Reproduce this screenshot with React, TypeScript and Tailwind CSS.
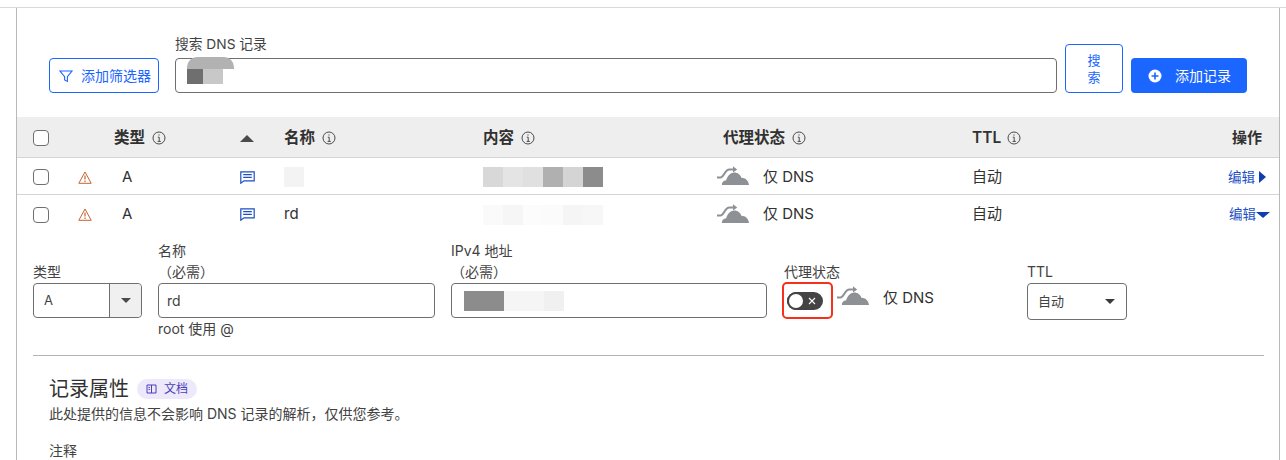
import React from 'react';

const InfoIcon = () => (
  <svg width="14" height="14" viewBox="0 0 14 14" fill="none" stroke="#4a4a4a" className="shrink-0">
    <circle cx="7" cy="7" r="6" strokeWidth="1" />
    <path d="M5.8 6.2H7.2V10.4M5.6 10.4H8.8" strokeWidth="1" />
    <path d="M6.4 3.4H7.6V4.6H6.4Z" fill="#4a4a4a" stroke="none" />
  </svg>
);

const CloudIcon = () => (
  <svg width="33" height="21" viewBox="0 0 33 21" className="shrink-0">
    <path d="M1 12.4H4.4C8 12.4 8.6 4.6 13.4 4.6H17.6" fill="none" stroke="#8d9095" strokeWidth="2" />
    <path d="M17 1.2L21.2 4.4L17 7.6Z" fill="#8d9095" />
    <path d="M6 20C5.6 17.4 7.6 15.4 10.2 15.2C11.4 11 14.6 7.6 18.4 7.6C21.6 7.6 24.4 9.8 25.4 12.8C29.2 12.8 32.6 15.6 33 20Z" fill="#8d9095" />
  </svg>
);

const WarnIcon = () => (
  <svg width="14" height="13" viewBox="0 0 14 13" fill="none" className="shrink-0">
    <path d="M7 1L13.2 12.3H.8Z" stroke="#c8622f" strokeWidth="1" />
    <path d="M7 4.4V8.6M7 9.6V11" stroke="#c8622f" strokeWidth="1.2" />
  </svg>
);

const CommentIcon = () => (
  <svg width="15" height="13" viewBox="0 0 15 13" fill="none" className="shrink-0">
    <path d="M.8.8H14.2V9.8H4L.8 12.2Z" stroke="#1d4fc4" strokeWidth="1.2" />
    <path d="M3.2 3.6H11.8M3.2 6.4H11.8" stroke="#1d4fc4" strokeWidth="1.2" />
  </svg>
);

const Checkbox = () => (
  <span className="block w-4 h-4 rounded-[4px] border border-[#6f6f6f] bg-white" />
);

const Caret = ({ className }: { className: string }) => <span className={className} />;

function HeaderLabel({ text }: { text: string }) {
  return (
    <div className="flex items-center gap-[7px] font-semibold text-[15.5px] text-[#313131]">
      <span>{text}</span>
      <InfoIcon />
    </div>
  );
}

function Pixels({ colors }: { colors: string[] }) {
  return (
    <div className="flex">
      {colors.map((c, i) => (
        <div key={i} className="w-5 h-5" style={{ background: c }} />
      ))}
    </div>
  );
}

const rowCols = 'grid grid-cols-[45px_36px_126px_44px_199px_240px_249px_1fr_auto] items-center pl-4 pr-[17px] pt-[2px]';

function Row({ name, content, action, bordered }: { name: React.ReactNode; content: React.ReactNode; action: React.ReactNode; bordered?: boolean }) {
  return (
    <div className={`${rowCols} h-[37px] text-[15px] text-[#313131] ${bordered ? 'border-b border-[#d4d4d4]' : ''}`}>
      <Checkbox />
      <WarnIcon />
      <span className="pl-2">A</span>
      <CommentIcon />
      <div>{name}</div>
      <div>{content}</div>
      <div className="flex items-center gap-[14px] -ml-[7px] -mt-[3px]">
        <CloudIcon />
        <span className="mt-[3px]">仅 DNS</span>
      </div>
      <span>自动</span>
      {action}
    </div>
  );
}

export default function App() {
  return (
    <div className="h-[460px] overflow-hidden bg-white pt-[7px] text-[#313131] font-['Inter','Noto_Sans_CJK_SC',sans-serif]">
      <div className="border-t border-[#d9d9d9]">
        <div className="ml-4 w-[1264px] h-[452px] border-x border-[#b9b9b9]">
          {/* search bar */}
          <div className="flex items-end pl-8 pr-8 pt-[29px]">
            <button className="flex items-center gap-[8px] w-[110px] h-[35px] pl-[9px] rounded-[4px] border border-[#1a66ff] text-[#1a66ff] text-[14px]">
              <svg width="14" height="14" viewBox="0 0 14 14" fill="none" stroke="#1a66ff" strokeWidth="1.1">
                <path d="M1 2H13L8.4 7.6V12.4L5.6 11V7.6Z" />
              </svg>
              添加筛选器
            </button>
            <div className="flex flex-col ml-4 flex-1">
              <label className="text-[13.75px] leading-[15px] mb-[6px] text-[#424242]">搜索 DNS 记录</label>
              <div className="relative h-[35px] rounded-[4px] border border-[#6f6f6f] bg-white">
                <div className="absolute left-[11px] top-[10px] flex">
                  <div className="w-[16px] h-[15px] bg-[#6f6f6f]" />
                  <div className="w-[20px] h-[15px] bg-[#c8c8c8]" />
                </div>
                <div className="absolute left-[11px] -top-[2px] w-[47px] h-[12px] rounded-t-[10px] bg-[#b2b2b2]" />
              </div>
            </div>
            <button className="ml-2 w-[58px] h-[49px] rounded-[4px] border border-[#1a66ff] text-[#1a66ff] text-[13px] leading-[17px] px-5">
              搜索
            </button>
            <button className="ml-2 flex items-center gap-[13px] w-[116px] h-[35px] pl-[17px] rounded-[4px] bg-[#1a66ff] text-white text-[14px]">
              <svg width="14" height="14" viewBox="0 0 14 14">
                <circle cx="7" cy="7" r="6.5" fill="#fff" />
                <path d="M7 3.5V10.5M3.5 7H10.5" stroke="#1a66ff" strokeWidth="1.6" />
              </svg>
              添加记录
            </button>
          </div>

          {/* table */}
          <div className={`${rowCols} mt-6 h-[41px] bg-[#eeeeee] border-b border-[#d4d4d4]`}>
            <Checkbox />
            <span />
            <HeaderLabel text="类型" />
            <Caret className="w-0 h-0 border-x-[7px] border-x-transparent border-b-[7px] border-b-[#4a4a4a]" />
            <HeaderLabel text="名称" />
            <HeaderLabel text="内容" />
            <HeaderLabel text="代理状态" />
            <div className="flex items-center gap-[6px] font-semibold text-[15.5px]">
              <span>TTL</span>
              <InfoIcon />
            </div>
            <span className="font-semibold text-[15px]">操作</span>
          </div>
          <Row
            bordered
            name={<div className="w-5 h-5 bg-[#f3f3f3]" />}
            content={<Pixels colors={['#d8d8d8', '#e4e4e4', '#e0e0e0', '#b0b0b0', '#d4d4d4', '#8c8c8c']} />}
            action={
              <div className="flex items-center gap-1 -mr-1 text-[13.5px] text-[#1d4fc4]">
                编辑
                <Caret className="w-0 h-0 border-y-[6px] border-y-transparent border-l-[7px] border-l-[#0f3fae]" />
              </div>
            }
          />
          <Row
            name="rd"
            content={<Pixels colors={['#fafafa', '#f6f6f6', '#fcfcfc', '#fbfbfb', '#f5f5f5', '#f7f7f7']} />}
            action={
              <div className="flex items-center -mr-2 text-[13.5px] text-[#1d4fc4]">
                编辑
                <Caret className="w-0 h-0 border-x-[7px] border-x-transparent border-t-[6px] border-t-[#0f3fae]" />
              </div>
            }
          />

          {/* edit form */}
          <div className="grid grid-cols-[109px_277px_316px_228px_100px] gap-x-4 pl-4 pt-[8px] text-[14px] text-[#424242]">
            <label className="self-end leading-[21px]">类型</label>
            <label className="self-end leading-[21px]">
              名称
              <br />
              （必需）
            </label>
            <label className="self-end leading-[21px]">
              IPv4 地址
              <br />
              （必需）
            </label>
            <label className="self-end leading-[21px] pl-[1px]">代理状态</label>
            <label className="self-end leading-[21px]">TTL</label>

            <div className="flex h-[35px] rounded-[4px] border border-[#6f6f6f] mt-[1px]">
              <span className="flex-1 pl-[10px] leading-[33px] text-[13px]">A</span>
              <span className="flex items-center justify-center w-[32px] border-l border-[#6f6f6f] bg-[#f0f0f0] rounded-r-[4px]">
                <Caret className="w-0 h-0 border-x-[5px] border-x-transparent border-t-[5px] border-t-[#4a4a4a]" />
              </span>
            </div>
            <input readOnly value="rd" className="h-[35px] mt-[1px] rounded-[4px] border border-[#6f6f6f] pl-2 text-[14px] outline-none" />
            <div className="flex items-center h-[35px] mt-[1px] pl-3 rounded-[4px] border border-[#6f6f6f]">
              <Pixels colors={['#8c8c8c', '#8c8c8c', '#f5f5f5', '#f5f5f5', '#f0f0f0']} />
            </div>
            <div className="flex items-start">
              <div className="flex items-center w-[51px] h-[37px] -ml-[1px] pl-[3px] rounded-[5px] border-2 border-[#f5311c]">
                <div className="relative w-9 h-[18px] rounded-full bg-[#444444]">
                  <span className="absolute left-0 top-0 w-[18px] h-[18px] rounded-full bg-white border-2 border-[#444444]" />
                  <svg width="8" height="8" viewBox="0 0 8 8" className="absolute right-[7px] top-[5px]" stroke="#fff" strokeWidth="1.1">
                    <path d="M1 1L7 7M7 1L1 7" />
                  </svg>
                </div>
              </div>
              <div className="flex items-center gap-[14px] ml-[3px] text-[15px] text-[#313131]">
                <CloudIcon />
                <span className="mt-[5px]">仅 DNS</span>
              </div>
            </div>
            <div className="flex items-center justify-between h-[37px] mt-[1px] pl-[10px] pr-[11px] rounded-[4px] border border-[#6f6f6f] text-[13px]">
              <span>自动</span>
              <Caret className="w-0 h-0 border-x-[5px] border-x-transparent border-t-[5px] border-t-[#3a3a3a]" />
            </div>

            <span />
            <span className="leading-[20px] -mt-[1px]">root 使用 @</span>
          </div>

          <div className="ml-4 mr-[15px] mt-[16px] border-t border-[#b4b4b4]" />

          <div className="pl-[32px] pt-[20px]">
            <div className="flex items-center gap-2">
              <h2 className="text-[20px] leading-[26px] font-normal text-[#313131]">记录属性</h2>
              <span className="flex items-center gap-[7px] h-5 pl-[9px] w-[60px] rounded-full bg-[#ede9fb] text-[12px] text-[#4b3fb8]">
                <svg width="11" height="10" viewBox="0 0 11 10" fill="none" stroke="#4b3fb8" strokeWidth="1">
                  <path d="M1 1H10V9H1ZM5.5 1V9M2.5 3.4H4M2.5 5.4H4" />
                </svg>
                文档
              </span>
            </div>
            <p className="text-[14px] leading-[20px] mt-[2px] text-[#424242]">此处提供的信息不会影响 DNS 记录的解析，仅供您参考。</p>
            <p className="text-[14px] leading-[20px] mt-[17px] text-[#424242]">注释</p>
          </div>
        </div>
      </div>
    </div>
  );
}
